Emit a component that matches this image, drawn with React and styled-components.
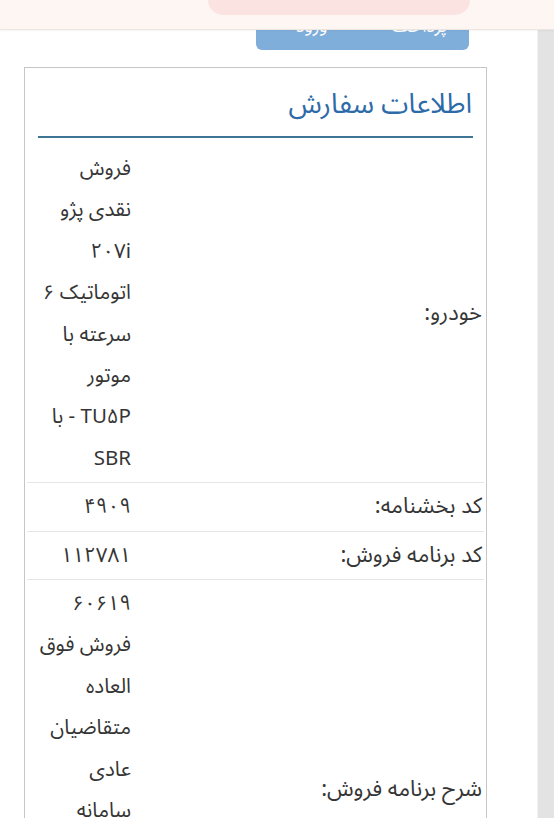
import React from "react";
import styled, { createGlobalStyle } from "styled-components";

const GlobalStyle = createGlobalStyle`
  html, body { margin: 0; padding: 0; background: #ffffff; }
  body {
    font-family: "Noto Sans Arabic", "Vazirmatn", "DejaVu Sans", sans-serif;
    color: #353535;
  }
`;

const Page = styled.div`
  display: flex;
  min-height: 100vh;
  overflow: hidden;
`;

const Main = styled.main`
  flex: 1;
  padding-top: 10px;
`;

const ScrollStrip = styled.div`
  width: 16px;
  flex-shrink: 0;
  background: #e3e3e3;
  border-left: 1px solid #f2f2f2;
`;

const Header = styled.header`
  position: fixed;
  top: 0;
  left: 0;
  right: 0;
  height: 29px;
  display: flex;
  align-items: flex-start;
  padding-left: 208px;
  background: #fdf6f3;
  border-bottom: 1px solid #ebe4df;
  box-shadow: 0 1px 2px rgba(0, 0, 0, 0.04);
  z-index: 10;
`;

const Pill = styled.div`
  width: 262px;
  height: 15px;
  background: #fbe3e2;
  border-radius: 0 0 16px 16px;
`;

const ActionButton = styled.button`
  display: flex;
  justify-content: space-between;
  align-items: center;
  box-sizing: border-box;
  margin-left: 256px;
  width: 213px;
  height: 40px;
  padding: 0 22px 9px 40px;
  border: none;
  border-radius: 6px;
  background: #80aedb;
  color: #ffffff;
  font-family: inherit;
  font-size: 18px;
  direction: rtl;
`;

const Card = styled.section`
  box-sizing: border-box;
  margin: 17px 0 0 24px;
  width: 463px;
  border: 1px solid #c6c6c6;
  direction: rtl;
  padding-bottom: 20px;
`;

const Title = styled.h2`
  margin: 0 13px;
  padding: 17px 1px 12px;
  font-size: 27.5px;
  line-height: 39px;
  font-weight: 400;
  color: #2d6aa8;
  border-bottom: 2px solid #3e7594;
`;

const Table = styled.div`
  margin: 7px 2px 0;
`;

const Row = styled.div`
  display: grid;
  grid-template-columns: 1fr 108px;
  border-top: ${(p) => (p.$first ? "none" : "1px solid #e6e6e6")};
`;

const Label = styled.div`
  align-self: center;
  padding: 3px 2px;
  font-size: 22px;
  line-height: 41.4px;
  color: #353535;
`;

const Value = styled.div`
  padding: 3px 4px;
  font-size: 20.5px;
  line-height: 41.4px;
  color: #353535;
`;

const Line = styled.span`
  display: block;
  white-space: nowrap;
`;

const rows = [
  {
    label: "خودرو:",
    lines: ["فروش", "نقدی پژو", "۲۰۷i", "اتوماتیک ۶", "سرعته با", "موتور", "TU۵P - با", "SBR"],
  },
  { label: "کد بخشنامه:", lines: ["۴۹۰۹"] },
  { label: "کد برنامه فروش:", lines: ["۱۱۲۷۸۱"] },
  {
    label: "شرح برنامه فروش:",
    lines: ["۶۰۶۱۹", "فروش فوق", "العاده", "متقاضیان", "عادی", "سامانه", "یکپارچه", "فروش", "خودرو", "ایران"],
  },
];

export default function App() {
  return (
    <>
      <GlobalStyle />
      <Header>
        <Pill />
      </Header>
      <Page>
        <Main>
          <ActionButton type="button">
            <span>پرداخت</span>
            <span>ورود</span>
          </ActionButton>
          <Card>
            <Title>اطلاعات سفارش</Title>
            <Table>
              {rows.map((r, i) => (
                <Row key={r.label} $first={i === 0}>
                  <Label>{r.label}</Label>
                  <Value>
                    {r.lines.map((l, j) => (
                      <Line key={j}>{l}</Line>
                    ))}
                  </Value>
                </Row>
              ))}
            </Table>
          </Card>
        </Main>
        <ScrollStrip />
      </Page>
    </>
  );
}
